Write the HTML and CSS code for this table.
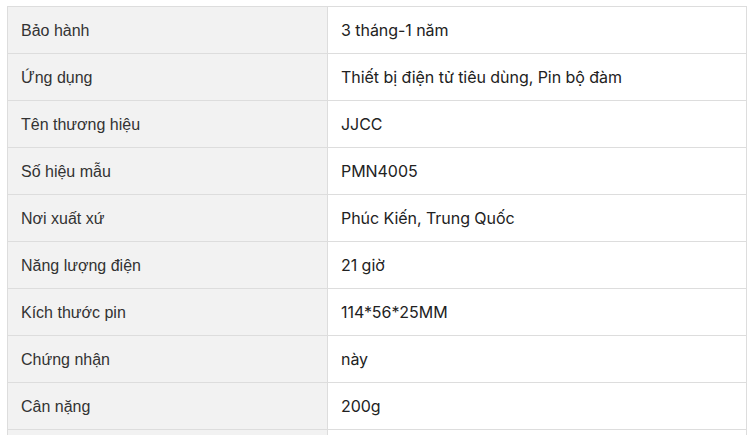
FILE: index.html
```html
<!DOCTYPE html>
<html lang="vi">
<head>
<meta charset="utf-8">
<link rel="stylesheet" href="styles.css">
</head>
<body>
<div class="wrap">
<table class="spec">
<tbody>
<tr><td class="k">Bảo hành</td><td class="v">3 tháng-1 năm</td></tr>
<tr><td class="k">Ứng dụng</td><td class="v">Thiết bị điện tử tiêu dùng, Pin bộ đàm</td></tr>
<tr><td class="k">Tên thương hiệu</td><td class="v">JJCC</td></tr>
<tr><td class="k">Số hiệu mẫu</td><td class="v">PMN4005</td></tr>
<tr><td class="k">Nơi xuất xứ</td><td class="v">Phúc Kiến, Trung Quốc</td></tr>
<tr><td class="k">Năng lượng điện</td><td class="v">21 giờ</td></tr>
<tr><td class="k">Kích thước pin</td><td class="v">114*56*25MM</td></tr>
<tr><td class="k">Chứng nhận</td><td class="v">này</td></tr>
<tr><td class="k">Cân nặng</td><td class="v">200g</td></tr>
<tr><td class="k"></td><td class="v"></td></tr>
</tbody>
</table>
</div>
</body>
</html>
```
FILE: styles.css
```css
html, body {
  margin: 0;
  padding: 0;
  background: #ffffff;
}
.wrap {
  padding: 6px 3px 0 7px;
}
.spec {
  border-collapse: collapse;
  width: 740px;
  table-layout: fixed;
}
.spec td {
  border: 1px solid #dddddd;
  height: 46px;
  padding: 0 13px;
  box-sizing: border-box;
  font-size: 16px;
  line-height: 20px;
  vertical-align: middle;
}
.spec tr {
  height: 47px;
}
.spec .k {
  width: 320px;
  padding-top: 2px;
  background: #f2f2f2;
  color: #333333;
  font-family: "Liberation Sans", Arial, sans-serif;
}
.spec .v {
  background: #ffffff;
  color: #222222;
  letter-spacing: -0.05px;
  font-family: Inter, "Noto Sans", sans-serif;
}
```
